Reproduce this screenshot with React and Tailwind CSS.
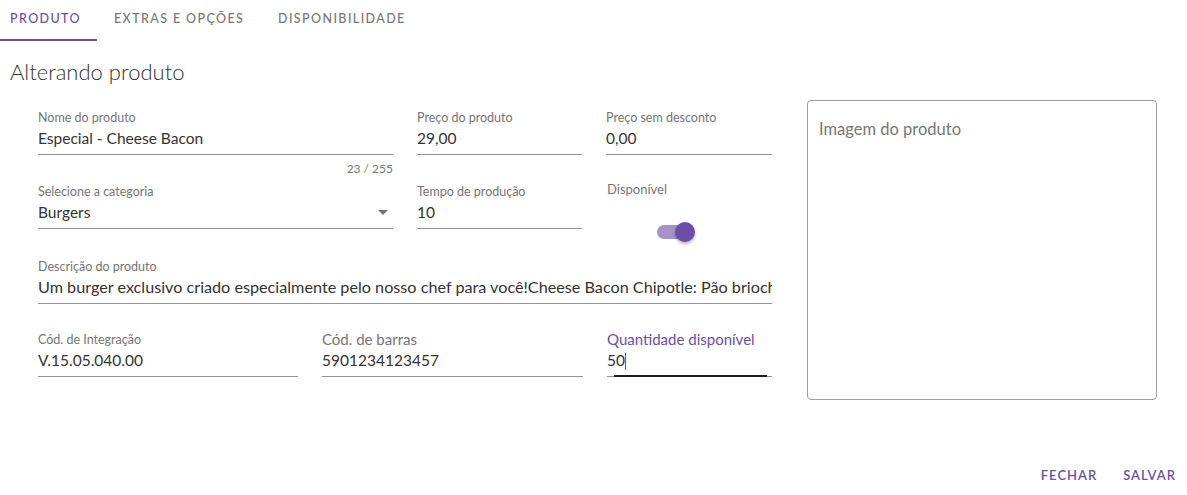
import { useState } from "react";

const PURPLE = "text-[#6a4fa8]";

function Field({ label, value, width, big, focused, counter, caret, valueSize = "text-[15.5px]" }) {
  return (
    <div className={`${width} flex flex-col`}>
      <label
        className={
          big
            ? `text-[15px] leading-[18px] h-[16px] -mt-[2px] mb-[2px] whitespace-nowrap ${focused ? "text-[#6a4fa8]" : "text-[#757575]"}`
            : "text-[12.5px] leading-[16px] h-[16px] text-[#757575] whitespace-nowrap"
        }
      >
        {label}
      </label>
      <div className="relative mt-[2px] border-b border-[#949494] pb-[6px]">
        <div className={`${valueSize} leading-[20px] text-[#333] whitespace-nowrap overflow-hidden`}>
          {value}
          {caret && <span className="inline-block w-px h-[17px] bg-[#6a4fa8] align-middle -mt-[2px]" />}
        </div>
        {focused && (
          <div className="absolute left-[7px] right-[5px] -bottom-[1px] h-[2px] bg-[#231637]" />
        )}
      </div>
      <div className="h-[20px] pt-[4px] text-right text-[12px] leading-[20px] text-[#757575]">
        {counter}
      </div>
    </div>
  );
}

export default function App() {
  const [tab, setTab] = useState(0);
  const [available, setAvailable] = useState(true);
  const tabs = [
    { name: "Produto", cls: "w-[97px] pl-[10px]" },
    { name: "Extras e opções", cls: "w-[164px] pl-[17px]" },
    { name: "Disponibilidade", cls: "w-[160px] pl-[17px]" },
  ];

  return (
    <div
      className="w-[1187px] h-[495px] bg-white overflow-hidden"
      style={{ fontFamily: "Lato, 'Noto Sans', sans-serif" }}
    >
      {/* tabs */}
      <div className="flex h-[42px]">
        {tabs.map((t, i) => (
          <button
            key={t.name}
            onClick={() => setTab(i)}
            className={`relative h-[42px] text-left uppercase text-[12.5px] font-medium tracking-[1.4px] pb-[4px] ${t.cls} ${
              tab === i ? "text-[#6a4fa8]" : "text-[#777]"
            }`}
          >
            {t.name}
            {tab === i && <span className="absolute left-0 right-0 bottom-[1px] h-[2px] bg-[#6a4fa8]" />}
          </button>
        ))}
      </div>

      <h1 className="pl-[10px] pt-[16px] text-[22px] leading-[28px] font-light text-[#333]">
        Alterando produto
      </h1>

      <div className="flex pl-[38px] pt-[14px]">
        {/* form */}
        <div className="w-[734px] flex flex-col pt-[10px]">
          <div className="flex gap-[24px]">
            <Field label="Nome do produto" value="Especial - Cheese Bacon" width="w-[355px]" counter="23 / 255" />
            <Field label="Preço do produto" value="29,00" width="w-[165px]" />
            <Field label="Preço sem desconto" value="0,00" width="w-[166px]" />
          </div>

          <div className="flex gap-[24px] mt-[9px]">
            <div className="w-[355px] flex flex-col">
              <label className="text-[12.5px] leading-[16px] h-[16px] text-[#757575]">Selecione a categoria</label>
              <div className="mt-[2px] border-b border-[#949494] pb-[6px] flex items-center justify-between">
                <span className="text-[15.5px] leading-[20px] text-[#333]">Burgers</span>
                <svg width="10" height="5" viewBox="0 0 10 5" className="mr-[5px]">
                  <path d="M0 0 L10 0 L5 5 Z" fill="#757575" />
                </svg>
              </div>
            </div>
            <Field label="Tempo de produção" value="10" width="w-[165px]" />
            <div className="w-[166px] flex flex-col">
              <label className="text-[13px] leading-[16px] h-[16px] -mt-[3px] pl-[1px] text-[#757575]">Disponível</label>
              <button
                onClick={() => setAvailable(!available)}
                className="relative ml-[51px] mt-[25px] w-[38px] h-[20px]"
              >
                <span className="absolute left-0 top-[3px] w-[36px] h-[14px] rounded-full bg-[#a592cb]" />
                <span
                  className={`absolute top-0 w-[20px] h-[20px] rounded-full shadow-[0_2px_3px_rgba(0,0,0,0.3)] ${
                    available ? "left-[18px] bg-[#6a4fa8]" : "left-0 bg-[#f5f5f5]"
                  }`}
                />
              </button>
            </div>
          </div>

          <div className="mt-[10px]">
            <Field
              label="Descrição do produto"
              value="Um burger exclusivo criado especialmente pelo nosso chef para você!Cheese Bacon Chipotle: Pão brioche, blend de costela, queijo cheddar, bacon crocante e molho chipotle."
              width="w-[734px]"
              valueSize="text-[16.2px]"
            />
          </div>

          <div className="flex gap-[24px] mt-[8px]">
            <Field label="Cód. de Integração" value="V.15.05.040.00" width="w-[260px]" />
            <Field label="Cód. de barras" value="5901234123457" width="w-[261px]" big />
            <Field label="Quantidade disponível" value="50" width="w-[165px]" big focused caret />
          </div>
        </div>

        {/* image */}
        <div className="ml-[35px] w-[350px] h-[300px] border border-[#9e9e9e] rounded-[4px] px-[11px] pt-[16px]">
          <span className="text-[16.5px] leading-[20px] text-[#777]">Imagem do produto</span>
        </div>
      </div>

      <div className="flex justify-end pr-[11px] mt-[66px] gap-[26px]">
        <button className={`text-[13px] font-semibold tracking-[1px] ${PURPLE}`}>FECHAR</button>
        <button className={`text-[13px] font-semibold tracking-[1px] ${PURPLE}`}>SALVAR</button>
      </div>
    </div>
  );
}
